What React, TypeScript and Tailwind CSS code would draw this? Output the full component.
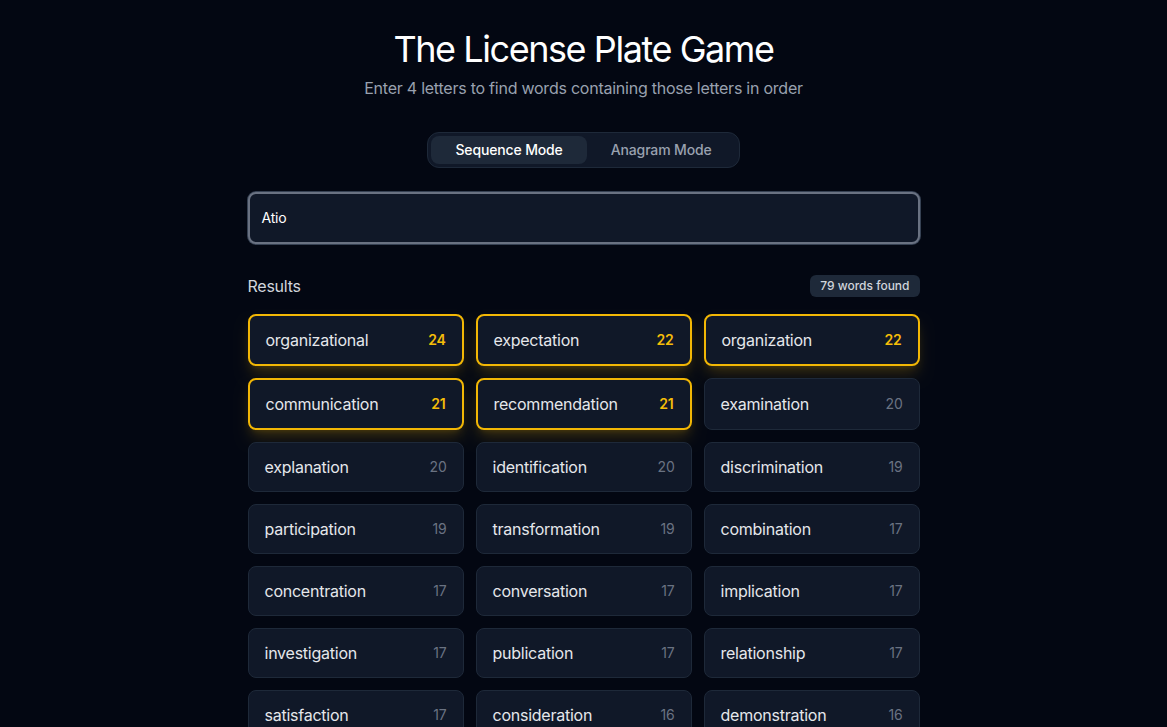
import React from "react";

const words: [string, number][] = [
  ["organizational", 24],
  ["expectation", 22],
  ["organization", 22],
  ["communication", 21],
  ["recommendation", 21],
  ["examination", 20],
  ["explanation", 20],
  ["identification", 20],
  ["discrimination", 19],
  ["participation", 19],
  ["transformation", 19],
  ["combination", 17],
  ["concentration", 17],
  ["conversation", 17],
  ["implication", 17],
  ["investigation", 17],
  ["publication", 17],
  ["relationship", 17],
  ["satisfaction", 17],
  ["consideration", 16],
  ["demonstration", 16],
  ["administration", 16],
  ["authorization", 16],
  ["certification", 16],
];

export default function App() {
  return (
    <div
      className="min-h-screen bg-[#030712] text-white tracking-[-0.015em]"
      style={{ fontFamily: "Inter, 'Noto Sans', sans-serif" }}
    >
      <div className="mx-auto max-w-[672px] pt-[29px] pb-10">
        <h1 className="text-center text-4xl font-normal tracking-[-0.04em] text-white">
          The License Plate Game
        </h1>
        <p className="mt-[7px] text-center text-base text-gray-400">
          Enter 4 letters to find words containing those letters in order
        </p>

        <div className="mt-8 flex justify-center">
          <div className="flex rounded-xl border border-gray-800 bg-gray-900 p-[3px]">
            <button className="rounded-lg bg-gray-800 px-6 py-1 text-sm font-medium tracking-[-0.01em] text-white">
              Sequence Mode
            </button>
            <button className="rounded-lg px-6 py-1 text-sm font-medium tracking-[-0.01em] text-gray-400">
              Anagram Mode
            </button>
          </div>
        </div>

        <div className="mt-6 flex h-[52px] items-center rounded-lg border-2 border-gray-500 bg-gray-900 px-3 ring-1 ring-gray-700">
          <span className="text-sm text-white">Atio</span>
        </div>

        <div className="mt-[30px] mb-4 flex items-center justify-between">
          <span className="text-base text-gray-300">Results</span>
          <span className="rounded-md bg-gray-800 px-2.5 py-[3px] text-xs font-medium tracking-normal text-gray-300">
            79 words found
          </span>
        </div>

        <div className="grid grid-cols-3 gap-3">
          {words.map(([w, n]) => {
            const hi = n >= 21;
            return (
              <div
                key={w}
                className={
                  hi
                    ? "flex items-center justify-between rounded-lg border-2 border-[#f2b705] bg-gray-900 px-4 py-3 shadow-lg shadow-yellow-500/20"
                    : "flex items-center justify-between rounded-lg border border-gray-800 bg-gray-900 px-4 py-3"
                }
              >
                <span className="text-base text-gray-200">{w}</span>
                <span
                  className={
                    hi
                      ? "text-sm font-semibold text-[#f5bd08]"
                      : "text-sm text-gray-500"
                  }
                >
                  {n}
                </span>
              </div>
            );
          })}
        </div>
      </div>
    </div>
  );
}
